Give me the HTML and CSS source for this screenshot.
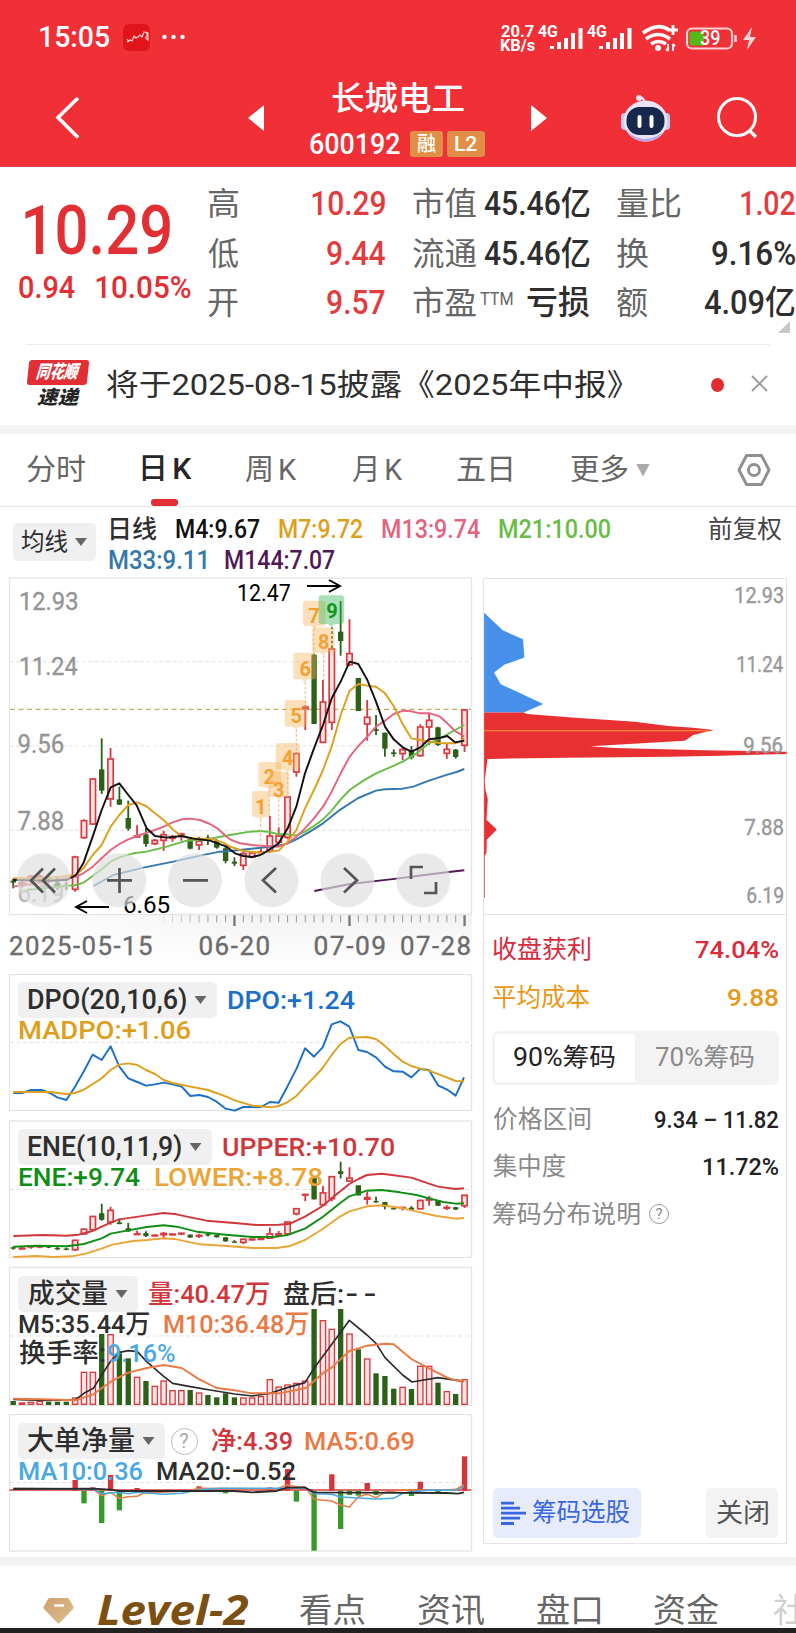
FILE: index.html
```html
<!DOCTYPE html>
<html lang="zh-CN">
<head>
<meta charset="utf-8">
<title>长城电工 600192</title>
<link rel="stylesheet" href="styles.css">
</head>
<body>
<header class="top">
  <div class="status">
    <span class="clock fit" data-w="69">15:05</span>
    <svg class="app-icon" width="28" height="27" viewBox="0 0 28 27"><rect width="27" height="27" rx="6" fill="#e0151c"/><path d="M4 18l3-2 2 1 2-5 2 2 2-1 2-2 2 2 2-5 3 1v4M4 15l2 3M23 8l2 1v7l-3-3" fill="none" stroke="#fff" stroke-width="1.2" opacity=".8"/></svg>
    <svg class="more-dots" width="26" height="8" viewBox="0 0 26 8" fill="#fff"><circle cx="3.5" cy="4" r="2.2"/><circle cx="12.5" cy="4" r="2.2"/><circle cx="21.5" cy="4" r="2.2"/></svg>
    <svg class="signals" width="262" height="32" viewBox="498 22 262 32" fill="#fff">
      <g class="tiny"><text data-x="501" data-y="35.500" data-w="33">20.7</text><text data-x="501" data-y="49.500" data-w="34">KB/s</text><text data-x="538" data-y="36" data-w="20">4G</text><text data-x="587" data-y="36" data-w="20">4G</text></g>
      <path d="M552 45v3M559 41v7M566 37v11M573 32v16M580.500 27v21M601 45v3M608 41v7M615 37v11M622 32v16M629.500 27v21" stroke="#fff" stroke-width="4"/>
      <g fill="none" stroke="#fff" stroke-width="3.500"><path d="M643 32q15-11 26 -3M646 38q12-9 24 0M651 43q7.500-5 15 0"/><path d="M673 24v10M668 29h10" stroke-width="2.800"/><path d="M668 43v7M668 50l-2-2M673 43v7M673 43l2 2" stroke-width="1.800"/></g><circle cx="658" cy="47" r="3"/>
      <rect x="687" y="27.500" width="45" height="20" rx="5" fill="none" stroke="#ffd0d2" stroke-width="2.200"/><path d="M691 30.500h13v14h-13q-1.500 0-1.500-2v-10q0-2 1.500-2z" fill="#55b818"/><path d="M735.500 34v7" stroke="#ffd0d2" stroke-width="2.500"/>
      <text class="batt" data-x="700" data-y="44" data-w="20">39</text>
      <path d="M752 26l-9 13h6l-2 10 9-13h-6z" fill="#ffd5d7"/>
    </svg>
  </div>
  <nav class="nav">
    <svg width="26" height="46" viewBox="0 0 26 46"><path d="M23 3L3 22.500l20 20" fill="none" stroke="#fff" stroke-width="3.600"/></svg>
    <svg width="16" height="26" viewBox="0 0 16 26"><path d="M16 0v26L0 13z" fill="#fff"/></svg>
    <div class="stock">
      <h1><span class="fit" data-w="132">长城电工</span></h1>
      <div class="code"><span class="fit" data-w="90">600192</span><b class="badge wide-a"><span class="fit" data-w="19">融</span></b><b class="badge wide-b"><span class="fit" data-w="22">L2</span></b></div>
    </div>
    <svg width="16" height="26" viewBox="0 0 16 26"><path d="M0 0v26l16-13z" fill="#fff"/></svg>
    <svg width="49" height="48" viewBox="0 0 49 48"><path d="M23 8q0-5-5-4" fill="none" stroke="#f5dfe9" stroke-width="2.500"/><circle cx="18" cy="4" r="3" fill="#f5dfe9"/><rect x="0" y="19" width="8" height="17" rx="4" fill="#c9c8ee"/><rect x="41" y="19" width="8" height="17" rx="4" fill="#c9c8ee"/><ellipse cx="24.500" cy="27" rx="22" ry="20.500" fill="#e9e4f8"/><path d="M7 38q17 14 35 0-6 9-17.500 9.500Q12 47 7 38z" fill="#b6a8ef"/><rect x="5.500" y="13" width="38" height="28" rx="13" fill="#17284c"/><path d="M18.500 23v9M30.500 23v9" stroke="#fff" stroke-width="4" stroke-linecap="round"/></svg>
    <svg width="43" height="44" viewBox="0 0 43 44"><circle cx="20" cy="21" r="18.500" fill="none" stroke="#fff" stroke-width="3"/><path d="M32 34l7 7" stroke="#fff" stroke-width="3.200"/></svg>
  </nav>
</header>

<section class="quote">
  <div class="last">
    <div class="price"><span class="fit" data-w="145">10.29</span></div>
    <div class="change"><span class="fit" data-w="56">0.94</span><span class="fit" data-w="95">10.05%</span></div>
  </div>
  <dl class="metrics">
    <div><dt><span class="fit" data-w="30">高</span></dt><dd class="up"><span class="fit" data-w="73">10.29</span></dd></div>
    <div><dt><span class="fit" data-w="30">低</span></dt><dd class="up"><span class="fit" data-w="58">9.44</span></dd></div>
    <div><dt><span class="fit" data-w="30">开</span></dt><dd class="up"><span class="fit" data-w="58">9.57</span></dd></div>
  </dl>
  <dl class="metrics">
    <div><dt><span class="fit" data-w="63">市值</span></dt><dd><span class="fit" data-w="106">45.46亿</span></dd></div>
    <div><dt><span class="fit" data-w="63">流通</span></dt><dd><span class="fit" data-w="106">45.46亿</span></dd></div>
    <div><dt><span class="fit" data-w="63">市盈</span><sup class="fit" data-w="33">TTM</sup></dt><dd><span class="fit" data-w="63">亏损</span></dd></div>
  </dl>
  <dl class="metrics last-col">
    <div><dt><span class="fit" data-w="64">量比</span></dt><dd class="up"><span class="fit" data-w="54">1.02</span></dd></div>
    <div><dt><span class="fit" data-w="31">换</span></dt><dd><span class="fit" data-w="83">9.16%</span></dd></div>
    <div><dt><span class="fit" data-w="31">额</span></dt><dd><span class="fit" data-w="91">4.09亿</span></dd></div>
    <svg width="12" height="12" viewBox="0 0 12 12"><path d="M12 0v12H0z" fill="#c8c8c8"/></svg>
  </dl>
</section>

<section class="notice">
  <div class="brand">
    <div class="brand-top"><span class="fit" data-w="45">同花顺</span></div>
    <div class="brand-sub"><span class="fit" data-w="43">速递</span></div>
  </div>
  <p><span class="fit" data-w="516">将于2025-08-15披露《2025年中报》</span></p>
  <i class="dot"></i>
  <svg width="18" height="18" viewBox="0 0 18 18"><path d="M1 1l15 15M16 1L1 16" stroke="#999" stroke-width="1.800"/></svg>
</section>

<div class="tabs">
  <span><span class="fit" data-w="58">分时</span></span>
  <span class="active"><span class="fit spaced" data-w="50">日K</span></span>
  <span><span class="fit spaced" data-w="52">周K</span></span>
  <span><span class="fit spaced" data-w="51">月K</span></span>
  <span><span class="fit" data-w="55">五日</span></span>
  <span class="more"><span class="fit" data-w="57">更多</span><i class="caret big"></i></span>
  <svg width="34" height="32" viewBox="0 0 34 32" fill="none" stroke="#909090" stroke-width="2.900"><path d="M9.500 1.500h15L32 16l-7.500 14.500h-15L2 16z" stroke-linejoin="round"/><circle cx="17" cy="16" r="5.500"/></svg>
</div>

<div class="ma-bar">
  <button class="pick ma"><span class="fit" data-w="47">均线</span><i class="caret"></i></button>
  <div class="ma-list">
    <div><span class="fit ink" data-w="46">日线</span><span class="fit k" data-w="84">M4:9.67</span><span class="fit amber" data-w="84">M7:9.72</span><span class="fit pink" data-w="98">M13:9.74</span><span class="fit lime" data-w="111">M21:10.00</span></div>
    <div><span class="fit steel" data-w="97">M33:9.11</span><span class="fit purple" data-w="110">M144:7.07</span></div>
  </div>
  <span class="adjust"><span class="fit" data-w="73">前复权</span></span>
</div>

<main class="board">
  <div class="charts">
    <svg class="main-chart" width="480" height="397" viewBox="0 577 480 397">
      <defs>
        <linearGradient id="shade" x1="0" x2="0" y1="0" y2="1"><stop offset="0" stop-color="#f3f3f3"/><stop offset="1" stop-color="#fff"/></linearGradient>
        <linearGradient id="veil"><stop offset="0" stop-color="#fff"/><stop offset=".5" stop-color="#fff" stop-opacity="0"/></linearGradient>
      </defs>
      <rect x="0" y="915" width="472" height="50" fill="url(#shade)"/>
      <rect x="0" y="915" width="472" height="50" fill="url(#veil)"/>
      <rect class="frame" x="9.500" y="578" width="462" height="336.500"/>
      <path class="grid" d="M10 661.700h461M10 746h461M10 830.300h461"/>
      <path d="M10 709.300h461" stroke="#c4ad62" stroke-width="1.200" stroke-dasharray="5 3.500"/>
      <g class="axis"><text data-x="20.700" data-y="610" data-w="57">12.93</text><text data-x="20.700" data-y="675" data-w="57">11.24</text><text data-x="18.500" data-y="753" data-w="45">9.56</text><text data-x="18.500" data-y="830" data-w="45">7.88</text><text data-x="18.500" data-y="902" data-w="45" opacity=".7">6.19</text></g>
      <g id="candles"></g>
      <g id="main-lines"></g>
      <g id="signals-td"></g>
      <g class="mark"><text data-x="238" data-y="601" data-w="52.500">12.47</text><text data-x="124" data-y="913" data-w="46">6.65</text></g>
      <path d="M307 586h32M329 580l11 6-11 6M109 907H77M87 901l-11 6 11 6" fill="none" stroke="#000" stroke-width="1.900"/>
      <g fill="#dedede" fill-opacity=".68"><circle cx="43.700" cy="880.300" r="27"/><circle cx="119.300" cy="880.300" r="27"/><circle cx="195" cy="880.300" r="27"/><circle cx="271.500" cy="880.300" r="27"/><circle cx="347.500" cy="880.300" r="27"/><circle cx="423.300" cy="880.300" r="27"/></g>
      <path d="M43 868.500L31 880.500l12 12M55 868.500L43 880.500l12 12M107 880.300h25M119.500 868v25M183 880.300h25M276 868l-13 12.300 13 12.300M344 868l13 12.300-13 12.300M411 879v-12h12M436 882v11h-12" fill="none" stroke="#555" stroke-width="2.700"/>
      <g id="ticks"></g>
      <g class="dates"><text data-x="10" data-y="954.500" data-w="142">2025-05-15</text><text data-x="199.500" data-y="954.500" data-w="70">06-20</text><text data-x="314.500" data-y="954.500" data-w="70">07-09</text><text data-x="401" data-y="954.500" data-w="69.500">07-28</text></g>
    </svg>

    <div class="panel p1">
      <svg width="480" height="146" viewBox="0 974 480 146"><rect class="frame" x="9.500" y="974.500" width="462" height="136"/><path class="grid" d="M10 1042.300h461"/><g id="dpo"></g></svg>
      <div class="legend">
        <div class="row"><button class="pick"><span class="fit" data-w="158">DPO(20,10,6)</span><i class="caret"></i></button><span class="fit blue" data-w="127">DPO:+1.24</span></div>
        <div class="row"><span class="fit amber" data-w="171">MADPO:+1.06</span></div>
      </div>
    </div>
    <div class="panel">
      <svg width="480" height="147" viewBox="0 1120 480 147"><rect class="frame" x="9.500" y="1121" width="462" height="136.500"/><path class="grid" d="M10 1189.500h461"/><g id="ene"></g></svg>
      <div class="legend">
        <div class="row"><button class="pick"><span class="fit" data-w="153">ENE(10,11,9)</span><i class="caret"></i></button><span class="fit red" data-w="171">UPPER:+10.70</span></div>
        <div class="row"><span class="fit green" data-w="121">ENE:+9.74</span><span class="fit gold" data-w="167">LOWER:+8.78</span></div>
      </div>
    </div>
    <div class="panel">
      <svg width="480" height="147" viewBox="0 1267 480 147"><rect class="frame" x="9.500" y="1267.500" width="462" height="138"/><path class="grid" d="M10 1336h461"/><g id="vol"></g></svg>
      <div class="legend">
        <div class="row"><button class="pick"><span class="fit" data-w="79">成交量</span><i class="caret"></i></button><span class="fit red" data-w="120">量:40.47万</span><span class="pair ink"><span class="fit" data-w="59">盘后:</span><span class="fit dashes" data-w="28">--</span></span></div>
        <div class="row"><span class="fit ink" data-w="130">M5:35.44万</span><span class="fit orange" data-w="144">M10:36.48万</span></div>
        <div class="row tight"><span class="fit ink" data-w="86">换手率:</span><span class="fit sky" data-w="67">9.16%</span></div>
      </div>
    </div>
    <div class="panel">
      <svg width="480" height="143" viewBox="0 1414 480 143"><rect class="frame" x="9.500" y="1414.500" width="462" height="136.500"/><path class="grid" d="M10 1482.500h461"/><g id="big"></g></svg>
      <div class="legend">
        <div class="row"><button class="pick"><span class="fit" data-w="106">大单净量</span><i class="caret"></i></button><i class="help">?</i><span class="fit red" data-w="80">净:4.39</span><span class="fit orange" data-w="109">MA5:0.69</span></div>
        <div class="row"><span class="fit sky" data-w="123">MA10:0.36</span><span class="fit ink" data-w="139">MA20:−0.52</span></div>
      </div>
    </div>
  </div>

  <aside class="chips">
    <svg width="304" height="337" viewBox="483 577.500 304 337">
      <g transform="translate(475 570) scale(.33333)">
        <path fill="#4690ec" d="M26 127L82 180 143 207 147 262 88 283 56 307 76 342 204 402 145 427H26z"/>
        <path fill="#e82f31" d="M26 427H145L155 432 300 443 480 455 580 468 655 473 717 480 655 495 630 512 565 516 345 529 420 534 690 541 936 545V552L735 557 590 560 275 563 78 566 36 567 28 630 30 660 37 688 33 750 64 779 34 810 33 850 28 858V985H26z"/>
        <path d="M26 482H700" stroke="#f6a13a" stroke-width="3.500"/>
      </g>
      <g class="price-axis"><text data-x="735.500" data-y="603" data-w="48">12.93</text><text data-x="737.500" data-y="671.500" data-w="46">11.24</text><text data-x="744.500" data-y="753" data-w="39">9.56</text><text data-x="744.500" data-y="835.500" data-w="39">7.88</text><text data-x="747.500" data-y="903.500" data-w="36">6.19</text></g>
    </svg>
    <div class="info">
      <div class="line crimson"><span class="fit" data-w="97">收盘获利</span><span class="fit n" data-w="83">74.04%</span></div>
      <div class="line tangerine"><span class="fit" data-w="97">平均成本</span><span class="fit n" data-w="50">9.88</span></div>
      <div class="segment"><span class="on"><span class="fit" data-w="101">90%筹码</span></span><span><span class="fit" data-w="99">70%筹码</span></span></div>
      <div class="line"><span class="fit" data-w="97">价格区间</span><span class="fit n" data-w="123">9.34 – 11.82</span></div>
      <div class="line"><span class="fit" data-w="73">集中度</span><span class="fit n" data-w="74">11.72%</span></div>
      <div class="line"><span class="explain"><span class="fit" data-w="147">筹码分布说明</span><i class="help small">?</i></span></div>
      <div class="actions">
        <button class="select"><svg width="25" height="25" viewBox="0 0 25 25"><path d="M0 2.200h13M0 7.200h19M0 12.200h25M0 17.200h19M0 22.500h13" stroke="#3a66e0" stroke-width="2.800"/></svg><span class="fit" data-w="97">筹码选股</span></button>
        <button class="close"><span class="fit" data-w="51">关闭</span></button>
      </div>
    </div>
  </aside>
</main>

<footer class="bottom">
  <svg width="31" height="28" viewBox="0 0 31 28"><defs><linearGradient id="gem" x1="0" y1="0" x2="1" y2="1"><stop offset="0" stop-color="#cfa06e"/><stop offset="1" stop-color="#dcbf8e"/></linearGradient></defs><path d="M6.500 1h18q1 0 1.500 1l4.500 8q.5 1-.5 2L16.500 26q-1 1-2 0L1 12q-1-1-.5-2L5 2q.5-1 1.500-1z" fill="url(#gem)"/><path d="M11 8.500h10" stroke="#fff" stroke-width="2.400"/></svg>
  <b class="level"><span class="fit" data-w="150">Level-2</span></b>
  <span><span class="fit" data-w="65">看点</span></span>
  <span><span class="fit" data-w="66">资讯</span></span>
  <span><span class="fit" data-w="63">盘口</span></span>
  <span><span class="fit" data-w="65">资金</span></span>
  <span class="faded"><span class="fit" data-w="32">社</span></span>
</footer>
<script src="charts.js"></script>
</body>
</html>
```
FILE: styles.css
```css
* { box-sizing: border-box; }
body { margin: 0; width: 796px; height: 1633px; overflow: hidden; background: #fff; color: #2e2e2e; font-family: Roboto, "Noto Sans CJK SC", sans-serif; }
h1, p, dl, dd, dt { margin: 0; font-weight: 400; }
svg { display: block; overflow: visible; }
button { border: 0; font: inherit; color: inherit; padding: 0; }
i, b { font-style: normal; }
.fit { display: inline-block; white-space: nowrap; transform-origin: 0 50%; flex: none; }

.top { height: 167px; background: #f12f37; color: #fff; border-bottom: 1px solid #d9434a; }
.status { height: 72px; padding-left: 40px; display: grid; grid-template-columns: 83px 38px 337px 1fr; align-items: center; }
.clock { font-size: 30px; font-weight: 500; line-height: 74px; }
.tiny { font-size: 16px; font-weight: 700; }
.batt { font-size: 20px; font-weight: 500; }
.signals { margin-top: 4px; }
.nav { height: 95px; padding-left: 55px; display: grid; grid-template-columns: 193px 16px 267px 90px 96px 1fr; align-items: center; }
.nav > svg { margin-bottom: 4px; }
.stock { text-align: center; }
.stock h1 { font-size: 33px; line-height: 46px; padding-top: 3px; font-weight: 500; }
.code { height: 45px; display: flex; justify-content: center; align-items: center; font-size: 29px; font-weight: 500; }
.badge { height: 26px; border-radius: 3px; background: #e18e47; font-size: 20px; line-height: 26px; font-weight: 500; display: flex; justify-content: center; }
.wide-a { width: 33px; margin-left: 10px; }
.wide-b { width: 38px; margin-left: 4px; }

.quote { height: 177px; display: grid; grid-template-columns: 208px 205px 204px 179px; }
.last { color: #e22f33; padding-top: 34px; }
.price { font-size: 68px; font-weight: 500; line-height: 61px; padding-left: 25px; }
.change { font-size: 32px; line-height: 51px; padding-left: 19px; display: flex; gap: 21px; font-weight: 500; }
.metrics { width: 177px; padding-top: 12px; font-size: 33px; color: #2e2e2e; }
.metrics.last-col { width: 178px; }
.metrics > div { display: flex; justify-content: space-between; height: 49.500px; line-height: 50px; }
.metrics dt { color: #666; font-size: 32px; display: flex; gap: 4px; }
.metrics dd { font-weight: 500; }
.metrics sup { font-size: 18px; line-height: 42px; }
.up { color: #e23c3f; }
.last-col svg { margin: -7px 5px 0 auto; }

.notice { height: 81px; margin: 0 26px; border-top: 1px solid #ececec; display: grid; grid-template-columns: 81px 577px 67px 18px; align-items: center; }
.brand { width: 60px; height: 50px; margin-left: 2px; color: #fff; text-align: center; font-style: italic; font-weight: 900; }
.brand-top { height: 25px; line-height: 24px; font-size: 18px; background: #e12f36; border-radius: 3px; transform: skewX(-6deg); }
.brand-sub { color: #262626; font-size: 19px; line-height: 25px; }
.notice p { font-size: 30px; line-height: 75px; margin-top: -2px; }
.dot { width: 13px; height: 14px; border-radius: 50%; background: #e22b2e; margin-left: 27px; margin-top: -1px; }
.notice > svg { margin-top: -2px; }

.tabs { height: 82px; padding-left: 27px; border-top: 9px solid #f3f3f3; border-bottom: 1px solid #e6e6e6; display: grid; grid-template-columns: 115px 103px 107px 105px 114px 166px 1fr; align-items: center; font-size: 29px; color: #666; line-height: 70px; }
.spaced { letter-spacing: 4px; }
.active { color: #262626; font-weight: 500; height: 72px; display: grid; grid-template-rows: 65px 7px; line-height: 70px; }
.active::after { content: ""; width: 27px; height: 7px; margin-left: 9px; border-radius: 3px; background: #e22f33; }
.more { display: flex; align-items: center; gap: 8px; }
.caret { width: 12px; height: 8px; background: #666; clip-path: polygon(0 0, 100% 0, 50% 100%); }
.caret.big { width: 14px; height: 13px; background: #aaa; }

.ma-bar { height: 70px; padding-left: 13px; display: grid; grid-template-columns: 96px 600px 1fr; font-size: 25px; }
.pick { display: flex; align-items: center; background: #f0f0f0; border-radius: 5px; height: 36px; padding: 0 10px; gap: 9px; font-size: 27px; line-height: 36px; }
.pick.ma { width: 83px; height: 38px; margin-top: 16px; padding: 0 8px; font-size: 24px; gap: 7px; }
.ma-list > div { display: flex; gap: 19px; line-height: 32px; font-weight: 500; }
.ma-list > div:first-child { padding: 8px 0 0 2px; line-height: 30px; }
.adjust { line-height: 45px; font-size: 25px; color: #444; }
.ink { color: #2e2e2e; } .k { color: #111; } .amber { color: #dda01c; } .pink { color: #e5637f; } .lime { color: #69bd46; } .steel { color: #3478aa; } .purple { color: #501857; }
.blue { color: #1a6fc9; } .red { color: #d0373a; } .green { color: #0e8e14; } .gold { color: #eba436; } .orange { color: #ea7a45; } .sky { color: #49a9e2; }

.board { display: grid; grid-template-columns: 483px 304px; height: 980px; }
.charts { width: 480px; }
.frame { fill: none; stroke: #e4e4e4; stroke-width: 1.300; }
.grid { stroke: #e2e2e2; stroke-width: 1; stroke-dasharray: 4 2.500; fill: none; }
.axis { font-size: 26.500px; fill: #959595; }
.mark { font-size: 23.500px; fill: #000; }
.dates { font-size: 26px; fill: #6c6c6c; letter-spacing: 1.500px; }
.price-axis { font-size: 21.500px; fill: #999; }
.axis, .price-axis, .dates { stroke-width: .4px; }
.axis { stroke: #959595; } .price-axis { stroke: #999; } .dates { stroke: #6c6c6c; }
.td { font-size: 60px; font-weight: 700; text-anchor: middle; }
.panel { display: grid; }
.panel > * { grid-area: 1 / 1; }
.legend { padding: 9px 0 0 17.500px; font-size: 26.500px; font-weight: 500; align-self: start; }
.p1 .legend { padding-top: 8px; }
.row { display: flex; align-items: center; gap: 13px; height: 36px; line-height: 36px; }
.row + .row { height: 24px; line-height: 24px; padding-left: 1px; gap: 15px; }
.row + .tight { height: 32px; line-height: 33px; gap: 3px; }
.legend .pick + .fit { margin-left: -2px; }
.pair { display: flex; gap: 4px; margin-left: 2px; }
.dashes { letter-spacing: 4px; }
.legend .pick + .help { margin-left: -7px; margin-right: 1px; }
.help { width: 27px; height: 27px; border: 1.800px solid #bbb; border-radius: 50%; color: #aaa; font-size: 20px; line-height: 24px; text-align: center; font-weight: 400; flex: none; }
.help.small { width: 20px; height: 20px; font-size: 15px; line-height: 18px; border: 1.500px solid #999; color: #888; }

.chips { height: 966px; border: 1px solid #e4e4e4; margin-top: .5px; display: flex; flex-direction: column; width: 304px; }
.chips > svg { border-bottom: 1px solid #e4e4e4; margin: -1px -1px 0; flex: none; }
.info { padding: 11.500px 8px 0 9px; flex: 1; display: flex; flex-direction: column; font-size: 25px; color: #8a8a8a; }
.line { display: flex; justify-content: space-between; height: 47.500px; line-height: 47.500px; }
.line .n { color: #222; font-weight: 500; font-size: 24.500px; }
.info .crimson, .info .crimson .n { color: #d92b3c; }
.info .tangerine, .info .tangerine .n { color: #e99716; }
.explain { display: flex; align-items: center; gap: 9px; }
.segment { height: 54px; margin: 10px -1px 10.500px; padding: 3px; background: #f3f3f3; border-radius: 6px; display: grid; grid-template-columns: 140px 141px; text-align: center; line-height: 48px; }
.segment .fit { margin-left: -2px; }
.on { background: #fff; border-radius: 4px; color: #222; }
.actions { margin-top: auto; margin-bottom: 4.500px; display: flex; justify-content: space-between; }
.actions button { height: 50px; line-height: 50px; border-radius: 5px; }
.select { width: 148px; padding-left: 8px; display: flex; align-items: center; gap: 7px; background: #e7ecfc; color: #3a66e0; font-size: 25px; }
.close { width: 72px; background: #f3f3f3; color: #555; font-size: 26px; }

.bottom { height: 76px; border-top: 9px solid #f3f3f3; border-bottom: 5px solid #222; padding-left: 43px; display: grid; grid-template-columns: 55px 202px 118px 119px 117px 119px 1fr; font-size: 33px; color: #666; line-height: 89px; overflow: hidden; }
.bottom > svg { margin-top: 31px; }
.level { color: #7b5012; font: italic 700 41px/86px "Open Sans", sans-serif; }
.faded { opacity: .3; }
```
FILE: charts.js
```js
// Text fitting: scale each label horizontally so its ink fills data-w pixels.
const ctx = document.createElement('canvas').getContext('2d');
function ink(el) {
  const s = getComputedStyle(el);
  ctx.font = `${s.fontStyle} ${s.fontWeight} ${s.fontSize} ${s.fontFamily}`;
  ctx.letterSpacing = s.letterSpacing === 'normal' ? '0px' : s.letterSpacing;
  const m = ctx.measureText(el.textContent);
  return { left: -m.actualBoundingBoxLeft, width: m.actualBoundingBoxLeft + m.actualBoundingBoxRight };
}
document.querySelectorAll('.fit').forEach(el => {
  const w = +el.dataset.w, m = ink(el), k = w / m.width;
  el.style.width = w + 'px';
  el.style.textAlign = 'left';
  el.style.transform = `translateX(${-m.left * k}px) scaleX(${k})`;
});
document.querySelectorAll('text[data-x]').forEach(el => {
  const m = ink(el), k = el.dataset.w / m.width;
  el.setAttribute('transform', `translate(${el.dataset.x - m.left * k} ${el.dataset.y}) scale(${k} 1)`);
});

const RED = '#d93a3f', GREEN = '#2d6118';
const X = i => 39.6 + 26.55 * i;
const put = (id, y, html) => {
  document.getElementById(id).innerHTML = `<g transform="translate(0 ${y}) scale(.33333)">${html}</g>`;
};
const line = (pts, color, w = 5.8) => `<polyline points="${pts}" fill="none" stroke="${color}" stroke-width="${w}" stroke-linejoin="round"/>`;
const shift = pts => pts.split(' ').map(p => { const [x, y] = p.split(','); return `${+x + 690},${y}`; }).join(' ');

// direction, high, low, body top, body bottom
const K = [
  ['g',925,955,932,938],['r',928,950,938,944],['r',914,945,918,924],['r',913,940,918,922],['g',918,940,922,928],['g',920,960,938,948],['g',935,960,944,950],
  ['r',857,965,860,959],['r',748,806,751,804],['r',624,765,626,763],['g',505,672,598,662],['r',534,710,566,688],['g',650,705,688,704],['g',692,782,744,776],
  ['r',766,803,797,802],['g',775,830,793,822],['r',807,826,810,822],['r',782,843,793,812],['r',795,815,799,806],['r',788,812,791,798],['g',805,838,808,836],
  ['r',800,840,812,826],['g',795,825,803,808],['g',808,836,812,833],['g',830,880,835,873],['g',862,888,875,881],['r',846,900,850,887],['r',845,865,848,862],
  ['r',835,850,845,849],['r',738,848,797,845],['r',772,822,797,818],['r',677,808,680,803],['r',547,620,550,607],['r',406,480,410,417],['g',252,462,254,462],
  ['r',330,520,395,518],['r',232,480,236,458],['g',93,257,185,213],['r',148,288,250,285],['g',324,423,324,423],['r',390,512,441,463],['g',435,495,478,483],
  ['g',488,560,488,536],['g',538,560,547,552],['r',535,570,538,552],['g',528,568,543,563],['r',463,560,470,558],['r',430,525,450,472],['g',470,528,472,525],
  ['r',520,566,537,551],['g',537,566,539,561],['r',417,546,419,527]
];
function candle(k, i, f) {
  const [d, h, l, t, b] = [k[0], ...k.slice(1).map(f)], x = X(i);
  if (d === 'g') return `<path d="M${x} ${h}V${l}" stroke="${GREEN}" stroke-width="5.5"/><rect x="${x - 8}" y="${t}" width="16" height="${Math.max(b - t, 4)}" fill="${GREEN}"/>`;
  return `<path d="M${x} ${h}V${t}M${x} ${b}V${l}" stroke="${RED}" stroke-width="5.5"/><rect x="${x - 8}" y="${t + 1}" width="16" height="${Math.max(b - t - 2, 2)}" fill="#fbe3e3" stroke="${RED}" stroke-width="5"/>`;
}
put('candles', 570, K.map((k, i) => candle(k, i, v => v)).join(''));

put('main-lines', 570,
  line('280,948 340,915 430,893 520,875 600,857 660,845 ' + shift('0,843 93,833 146,827 173,820 199,808 240,785 279,760 332,718 385,684 438,662 465,658 518,656 550,650 597,632 652,614 680,606 703,597'), '#3478aa') +
  line('80,960 228,945 250,938 278,918 305,898 332,875 358,862 400,850 440,845 500,830 560,812 620,808 ' + shift('0,795 60,785 93,783 119,786 146,793 173,793 199,797 225,785 252,768 279,748 305,722 332,688 359,660 400,632 438,610 480,592 518,575 560,550 597,520 640,500 675,480 703,465'), '#69bd46') +
  line('40,950 100,942 200,925 228,920 250,910 278,890 305,865 332,840 358,822 385,808 412,798 440,788 465,780 491,770 518,757 545,748 570,746 600,750 630,762 652,775 680,800 ' + shift('0,808 30,820 66,825 93,827 146,830 173,820 199,800 225,775 252,745 279,710 305,665 332,610 359,560 385,528 412,500 438,470 465,452 491,432 520,422 544,424 570,430 600,430 630,440 652,460 675,483 703,500'), '#e5637f') +
  line('40,925 140,925 228,915 250,895 278,855 305,825 332,770 358,735 385,705 412,697 438,708 465,730 491,750 520,780 545,798 570,805 600,806 640,808 670,818 ' + shift('0,830 40,843 93,848 146,842 173,815 199,780 225,715 252,660 279,600 305,530 332,435 359,362 385,342 412,347 438,350 465,370 491,408 518,462 544,505 570,510 597,515 640,520 675,520 690,515 703,505'), '#dda01c') +
  line('40,930 140,932 200,930 228,915 250,880 278,800 305,720 332,652 358,640 385,675 410,706 440,775 465,798 500,803 545,798 580,806 630,812 680,830 ' + shift('15,850 40,858 66,861 93,855 119,838 146,820 173,775 199,710 225,610 252,535 279,465 305,385 332,335 359,275 385,282 412,330 438,395 465,470 491,508 518,532 544,545 570,533 597,508 624,505 652,498 675,517 703,512'), '#111') +
  line(shift('253,963 360,942 500,926 560,918 650,907 703,901'), '#501857'));

// Sequence markers: x, y, width, height, label, centre x, baseline, stem end
const TD = [[66,663,52,78,1,92,732,830],[85,576,68,76,2,118,643,740],[116,605,62,76,3,146,682,775],[137,519,72,80,4,173,586,680],[164,390,68,80,5,199,458,550],[190,248,68,80,6,226,318,406],[219,92,68,76,7,252,159,252],[246,172,68,76,8,281,238,330],[266,76,76,86,9,306,144,235]];
put('signals-td', 570, TD.map(([x, y, w, h, n, c, b, s]) => {
  const g = n === 9, X0 = x + 690, C = c + 690;
  return `<path d="M${C} ${y + h + 8}V${s}" stroke="${g ? '#2d6118' : '#e6bf8a'}" stroke-width="3.5" stroke-dasharray="8 6"/>
  <path d="M${X0 + 8} ${y}h${w - 16}q8 0 8 8v${h - 16}q0 8-8 8h-${w / 2 - 18}l-10 8-10-8h-${w / 2 - 18}q-8 0-8-8v-${h - 16}q0-8 8-8z" fill="${g ? '#35b653' : '#f9b45c'}" opacity=".42"/>
  <text class="td" x="${C}" y="${b}" fill="${g ? '#0f9420' : '#f3a133'}">${n}</text>`;
}).join(''));

let ticks = '';
for (let i = 17; i < 52; i++) {
  const big = i === 25 || i === 38 || i === 51;
  ticks += `<path d="M${X(i)} 1036v${big ? 32 : 21}" stroke="${big ? '#777' : '#999'}" stroke-width="${big ? 7 : 3}" opacity="${Math.min(1, (i - 15) / 8)}"/>`;
}
put('ticks', 570, ticks);

put('dpo', 970,
  line('40,369 66,369 93,360 125,360 150,369 172,382 199,390 225,350 252,303 278,254 305,270 332,229 358,290 385,325 412,336 438,347 465,343 491,338 518,343 545,350 571,378 598,375 624,381 650,395 677,416 704,422 730,411 783,411 810,396 836,398 862,350 890,295 915,235 942,260 968,232 995,163 1021,154 1048,170 1075,240 1101,246 1128,262 1155,290 1181,304 1208,305 1234,322 1260,297 1287,300 1314,346 1340,358 1367,377 1392,322', '#1a6fc9') +
  line('40,366 150,366 199,372 225,369 252,359 278,342 305,325 332,300 358,284 385,280 412,285 438,300 465,312 491,330 518,339 571,350 624,360 677,379 704,391 757,407 810,412 836,408 862,397 890,377 915,349 942,322 968,294 995,255 1021,222 1048,203 1101,201 1128,207 1155,228 1181,252 1208,275 1234,288 1260,296 1287,302 1340,322 1367,333 1392,334', '#dda01c'));

put('ene', 1115, K.map((k, i) => candle(k, i, v => 240 + (v - 419) * .306)).join('') +
  line('40,363 130,360 200,362 235,359 278,348 305,335 332,323 358,313 440,301 491,294 530,298 571,307 620,317 704,324 770,330 836,329 870,326 915,305 968,273 995,250 1048,207 1075,192 1101,180 1145,176 1170,179 1234,188 1287,206 1314,215 1367,222 1392,220', '#d0373a') +
  line('40,395 110,392 200,394 252,387 305,370 332,356 385,346 440,336 491,331 530,335 590,350 677,359 757,366 830,365 862,360 915,341 968,306 1021,264 1048,244 1101,227 1145,225 1200,232 1250,240 1287,250 1330,261 1367,266 1392,265', '#0e8e14') +
  line('40,426 110,423 160,426 215,424 260,415 305,401 340,388 400,378 440,375 491,370 530,373 600,388 680,393 760,399 830,399 870,393 915,375 968,342 1021,304 1048,289 1101,274 1145,271 1210,280 1260,292 1310,303 1367,311 1392,309', '#eba436'));

const V = [423,427,425,422,425,425,425,412,335,335,222,222,280,295,350,363,377,361,390,390,390,397,405,412,400,412,412,412,408,357,379,373,368,361,147,180,206,147,220,268,295,340,348,386,380,387,317,317,368,393,402,357];
put('vol', 1260, V.map((t, i) => K[i][0] === 'g'
  ? `<rect x="${X(i) - 8}" y="${t}" width="16" height="${435 - t}" fill="${GREEN}"/>`
  : `<rect x="${X(i) - 8}" y="${t + 2}" width="16" height="${431 - t}" fill="#fbe3e3" stroke="${RED}" stroke-width="4"/>`).join('') +
  line('40,418 130,421 225,420 252,400 280,385 305,345 332,304 358,277 385,272 412,275 440,305 491,349 518,370 571,380 630,390 704,402 757,408 810,400 862,383 915,368 942,325 1021,218 1048,181 1101,225 1128,250 1155,293 1208,345 1236,366 1314,353 1392,364', '#2b2b2b', 5) +
  line('40,416 130,418 225,421 278,404 332,365 385,338 440,324 491,315 545,324 598,358 650,384 704,391 757,400 836,400 890,390 920,383 968,340 995,323 1048,273 1075,265 1101,257 1155,251 1181,253 1234,297 1287,325 1340,352 1367,361 1392,363', '#ea7a45'));

const FLOW = [[7,225],[8,295],[9,247],[10,354],[11,210],[12,316],[14,249],[21,244],[24,265],[29,247],[31,192],[32,290],[34,437],[36,208],[37,372],[38,270],[39,272],[40,234],[41,270],[45,273],[46,230],[48,264],[51,154]];
put('big', 1405, '<path d="M28 255H1414" stroke="#d93a3f" stroke-width="4.5"/>' +
  FLOW.map(([i, y]) => `<rect x="${X(i) - 8}" y="${Math.min(y, 257)}" width="16" height="${Math.abs(257 - y)}" fill="${y < 257 ? '#d6343a' : '#37992a'}"/>`).join('') +
  line('40,250 278,252 305,272 332,262 358,280 385,275 412,274 430,264 560,258 598,250 830,252 862,240 890,245 915,245 942,283 995,288 1021,300 1048,306 1075,275 1101,268 1128,278 1155,262 1210,254 1340,256 1370,252 1392,240', '#ea7a45', 4.5) +
  line('40,250 280,253 305,266 358,262 385,266 412,262 491,268 545,265 598,254 660,250 862,250 915,248 942,266 995,268 1021,276 1128,282 1181,280 1210,264 1287,255 1367,256 1392,245', '#49a9e2', 4.5) +
  line('40,252 278,251 332,254 358,258 700,258 757,262 830,258 862,248 915,248 942,262 1050,263 1340,264 1375,266 1392,262', '#2b2b2b', 5.5));
```
